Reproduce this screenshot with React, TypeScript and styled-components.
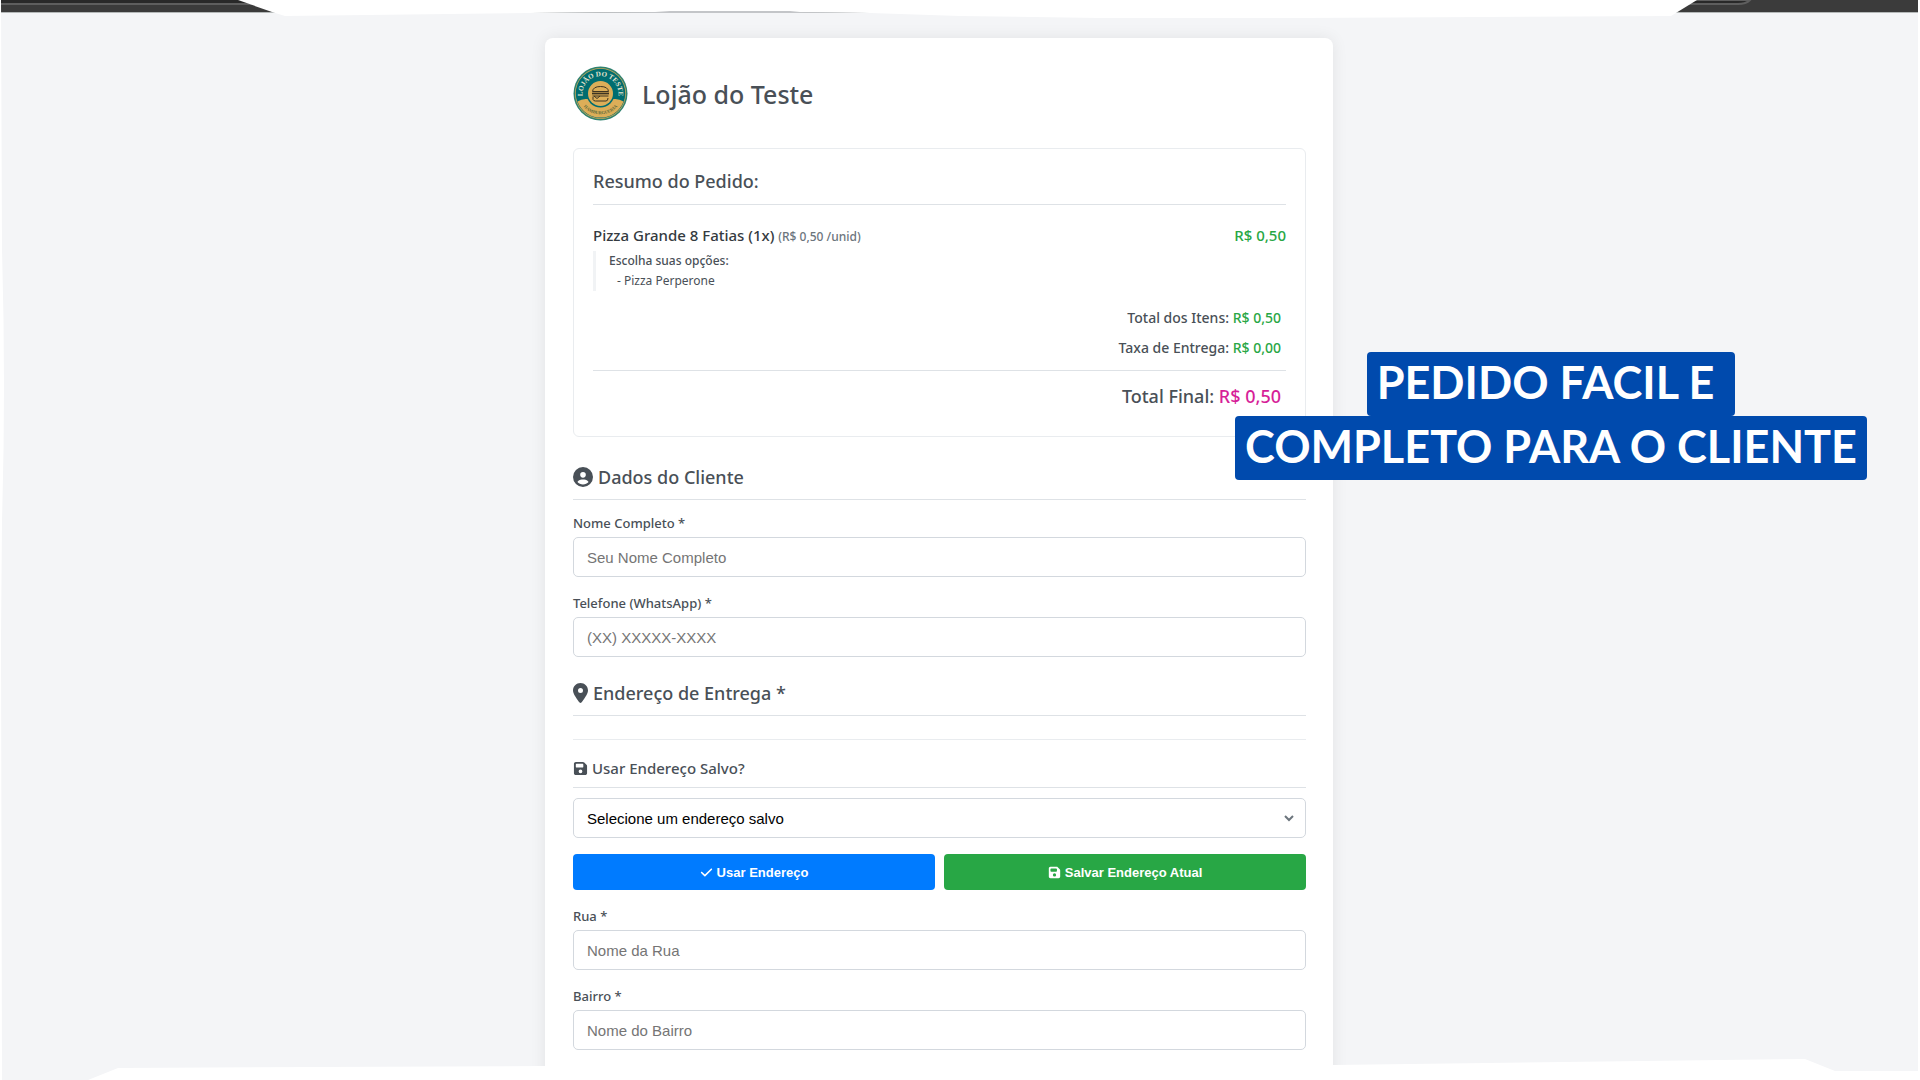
import React from 'react';
import styled, { createGlobalStyle } from 'styled-components';
import { FaCheck, FaCircleUser, FaFloppyDisk, FaLocationDot } from 'react-icons/fa6';

const GlobalStyle = createGlobalStyle`
  *, *::before, *::after { box-sizing: border-box; }
  body {
    margin: 0;
    background: #f4f5f7;
    color: #495057;
    font-family: "Noto Sans", "Segoe UI", sans-serif;
    font-weight: 500;
  }
`;

const Page = styled.main`
  position: relative;
  height: 100vh;
  overflow: hidden;
  padding: 38px 42px 0 0;
`;

const Card = styled.div`
  max-width: 788px;
  margin: 0 auto;
  padding: 28px 27px 28px 28px;
  background: #fff;
  border-radius: 8px;
  box-shadow: 0 0 16px rgba(0, 0, 0, 0.08);
`;

const StoreHeader = styled.header`
  display: flex;
  align-items: center;
  gap: 14px;
  margin-bottom: 27px;
`;

const Logo = styled.svg`
  width: 55px;
  height: 55px;
  flex: none;
`;

const StoreName = styled.h1`
  margin: 0;
  font-size: 25px;
  font-weight: 500;
  line-height: 36px;
`;

const Summary = styled.section`
  margin-bottom: 26px;
  padding: 19px;
  border: 1px solid #e9ecef;
  border-radius: 6px;
`;

const SummaryTitle = styled.h2`
  margin: 0 0 18px;
  padding-bottom: 10px;
  border-bottom: 1px solid #dee2e6;
  font-size: 18px;
  font-weight: 500;
  line-height: 26px;
`;

const ItemRow = styled.div`
  display: flex;
  justify-content: space-between;
  font-size: 15px;
  line-height: 24px;
  color: #343a40;
`;

const UnitPrice = styled.small`
  font-size: 12px;
  color: #6c757d;
`;

const Price = styled.span<{ $final?: boolean }>`
  color: ${(p) => (p.$final ? '#d61f98' : '#28a745')};
`;

const Options = styled.div`
  margin-top: 2px;
  padding-left: 13px;
  border-left: 3px solid #f1f3f5;
  font-size: 12px;
  line-height: 20px;
`;

const OptionList = styled.ul`
  margin: 0;
  padding-left: 8px;
  list-style: none;
  font-weight: 400;
`;

const Totals = styled.div`
  margin: 12px 0 7px;
  text-align: right;
`;

const TotalLine = styled.p`
  margin: 0;
  padding-right: 5px;
  font-size: 14px;
  line-height: 30px;
`;

const FinalLine = styled.p`
  margin: 7px 0 0;
  padding: 11px 5px 0 0;
  border-top: 1px solid #dee2e6;
  font-size: 18px;
  line-height: 28px;
`;

const SectionTitle = styled.h2`
  display: flex;
  align-items: center;
  gap: 5px;
  margin: 22px 0 13px;
  padding-bottom: 8px;
  border-bottom: 1px solid #dee2e6;
  font-size: 18px;
  font-weight: 500;
  line-height: 28px;
`;

const PinIcon = styled(FaLocationDot)`
  width: 15px;
  height: 20px;
`;

const SavedTitle = styled.h3`
  display: flex;
  align-items: center;
  gap: 4px;
  margin: 0 0 10px;
  padding-bottom: 8px;
  border-bottom: 1px solid #dee2e6;
  font-size: 15px;
  font-weight: 500;
  line-height: 22px;
`;

const Divider = styled.hr`
  margin: 23px 0 17px;
  border: 0;
  border-top: 1px solid #e9ecef;
`;

const FieldBox = styled.div`
  margin-bottom: 16px;
`;

const Label = styled.label`
  display: block;
  margin-bottom: 4px;
  font-size: 13px;
  line-height: 20px;
`;

const Input = styled.input`
  display: block;
  width: 100%;
  height: 40px;
  padding: 0 13px;
  border: 1px solid #d3d8de;
  border-radius: 5px;
  background: #fff;
  font: 15px "Liberation Sans", Arial, sans-serif;
  &::placeholder { color: #757575; }
`;

const SelectBox = styled.div`
  position: relative;
  margin-bottom: 16px;
`;

const Select = styled.select`
  display: block;
  appearance: none;
  width: 100%;
  height: 40px;
  padding: 0 36px 0 13px;
  border: 1px solid #d3d8de;
  border-radius: 5px;
  background: #fff;
  color: #000;
  font: 15px "Liberation Sans", Arial, sans-serif;
`;

const Chevron = styled.svg`
  position: absolute;
  right: 12px;
  top: 15px;
  width: 10px;
  height: 10px;
  pointer-events: none;
`;

const Actions = styled.div`
  display: grid;
  grid-template-columns: 1fr 1fr;
  gap: 9px;
  margin-bottom: 16px;
`;

const Action = styled.button<{ $color: string }>`
  display: flex;
  align-items: center;
  justify-content: center;
  gap: 4px;
  height: 36px;
  border: 0;
  border-radius: 4px;
  background: ${(p) => p.$color};
  color: #fff;
  font: bold 13px "Liberation Sans", Arial, sans-serif;
`;

const Callout = styled.p`
  position: absolute;
  top: 352px;
  right: 53px;
  display: flex;
  flex-direction: column;
  align-items: center;
  margin: 0;
  color: #fff;
  font-family: Lato, sans-serif;
  font-size: 45px;
  font-weight: 700;
  line-height: 60px;
`;

const CalloutLine = styled.span`
  padding: 0 10px 4px;
  border-radius: 4px;
  background: #004aad;
  white-space: pre;
`;

const Edges = styled.svg`
  position: absolute;
  inset: 0;
  width: 100%;
  height: 100%;
  pointer-events: none;
`;

function StoreLogo() {
  return (
    <Logo viewBox="0 0 110 110" role="img" aria-label="Lojão do Teste">
      <defs>
        <path id="arcTop" d="M21 68 A36 36 0 1 1 89 68" />
        <path id="arcBottom" d="M12 62 A44 44 0 0 0 98 62" />
      </defs>
      <circle cx="55" cy="55" r="54" fill="#2f8270" />
      <circle cx="55" cy="55" r="51" fill="#c9a95a" />
      <circle cx="55" cy="55" r="49.500" fill="#006d70" />
      <path d="M9 71 Q18 65 28 66 H82 Q92 65 101 71 A49 49 0 0 1 9 71Z" fill="#dcae58" />
      <circle cx="55" cy="55" r="28" fill="#006d70" />
      <circle cx="55" cy="55" r="25" fill="#dcae58" />
      <g fill="none" stroke="#3f3522" strokeWidth="2" strokeLinejoin="round">
        <path d="M39 51 Q40 41 55 41 Q70 41 71 51Z" />
        <path d="M38 55 H72" strokeWidth="3.500" />
        <path d="M39 60 H71 M42 60 L48 65 L54 60" />
        <path d="M40 62 V67 Q41 70 45 70 H66 Q70 70 70 64" />
      </g>
      <text fill="#e8e4cf" fontFamily="Liberation Serif, serif" fontWeight="700" fontSize="14">
        <textPath href="#arcTop" startOffset="50%" textAnchor="middle">LOJÃO DO TESTE</textPath>
      </text>
      <text fill="#5c6a3c" fontFamily="Liberation Serif, serif" fontWeight="700" fontSize="9">
        <textPath href="#arcBottom" startOffset="50%" textAnchor="middle">HAMBURGUERIA</textPath>
      </text>
    </Logo>
  );
}

function Field({ id, label, placeholder }: { id: string; label: string; placeholder: string }) {
  return (
    <FieldBox>
      <Label htmlFor={id}>{label}</Label>
      <Input id={id} placeholder={placeholder} />
    </FieldBox>
  );
}

export default function App() {
  return (
    <Page>
      <GlobalStyle />
      <Card>
        <StoreHeader>
          <StoreLogo />
          <StoreName>Lojão do Teste</StoreName>
        </StoreHeader>

        <Summary>
          <SummaryTitle>Resumo do Pedido:</SummaryTitle>
          <ItemRow>
            <span>
              Pizza Grande 8 Fatias (1x) <UnitPrice>(R$ 0,50 /unid)</UnitPrice>
            </span>
            <Price>R$ 0,50</Price>
          </ItemRow>
          <Options>
            Escolha suas opções:
            <OptionList>
              <li>- Pizza Perperone</li>
            </OptionList>
          </Options>
          <Totals>
            <TotalLine>Total dos Itens: <Price>R$ 0,50</Price></TotalLine>
            <TotalLine>Taxa de Entrega: <Price>R$ 0,00</Price></TotalLine>
            <FinalLine>Total Final: <Price $final>R$ 0,50</Price></FinalLine>
          </Totals>
        </Summary>

        <form>
          <SectionTitle><FaCircleUser size={20} />Dados do Cliente</SectionTitle>
          <Field id="nome" label="Nome Completo *" placeholder="Seu Nome Completo" />
          <Field id="telefone" label="Telefone (WhatsApp) *" placeholder="(XX) XXXXX-XXXX" />

          <SectionTitle><PinIcon />Endereço de Entrega *</SectionTitle>
          <Divider />
          <SavedTitle id="salvo-titulo"><FaFloppyDisk size={15} />Usar Endereço Salvo?</SavedTitle>
          <SelectBox>
            <Select aria-labelledby="salvo-titulo" defaultValue="">
              <option value="">Selecione um endereço salvo</option>
            </Select>
            <Chevron viewBox="0 0 10 10">
              <path d="M1 3 L5 7 L9 3" fill="none" stroke="#6c757d" strokeWidth="2" />
            </Chevron>
          </SelectBox>
          <Actions>
            <Action type="button" $color="#007bff"><FaCheck size={13} />Usar Endereço</Action>
            <Action type="button" $color="#28a745"><FaFloppyDisk size={13} />Salvar Endereço Atual</Action>
          </Actions>
          <Field id="rua" label="Rua *" placeholder="Nome da Rua" />
          <Field id="bairro" label="Bairro *" placeholder="Nome do Bairro" />
        </form>
      </Card>

      <Edges viewBox="0 0 1920 1080" preserveAspectRatio="none" aria-hidden="true">
        <rect width="1920" height="12" fill="#3b3b3b" />
        <rect width="300" height="3" fill="#292929" />
        <rect y="3" width="300" height="2" fill="#5e5e5e" />
        <path d="M1680 0 H1750 Q1746 4 1738 4 H1680Z" fill="#292929" stroke="#5e5e5e" strokeWidth="2" />
        <rect y="12" width="1920" height="1" fill="#b4b8b8" />
        <path d="M238 0 L272 12 L285 16 L530 13 L600 12 H800 L870 13 L960 16 L1100 18 H1300 L1671 16 L1697 0Z" fill="#fff" />
        <path d="M530 13 L655 12 L670 11 H790 L800 12 L870 13Z" fill="#c3c5c8" />
        <path d="M0 0 H1 L2 250 Q6 386 2 520 L1 640 L2 1080 H0Z" fill="#fff" />
        <path d="M88 1080 L118 1068 L545 1066 L1333 1065 L1805 1059 L1835 1071 H1918 V0 H1920 V1080Z" fill="#fff" />
        <path d="M1333 1061 V1067 H545 V1066 Z" fill="#fff" />
      </Edges>

      <Callout>
        <CalloutLine>{'PEDIDO FACIL E '}</CalloutLine>
        <CalloutLine>COMPLETO PARA O CLIENTE</CalloutLine>
      </Callout>
    </Page>
  );
}
